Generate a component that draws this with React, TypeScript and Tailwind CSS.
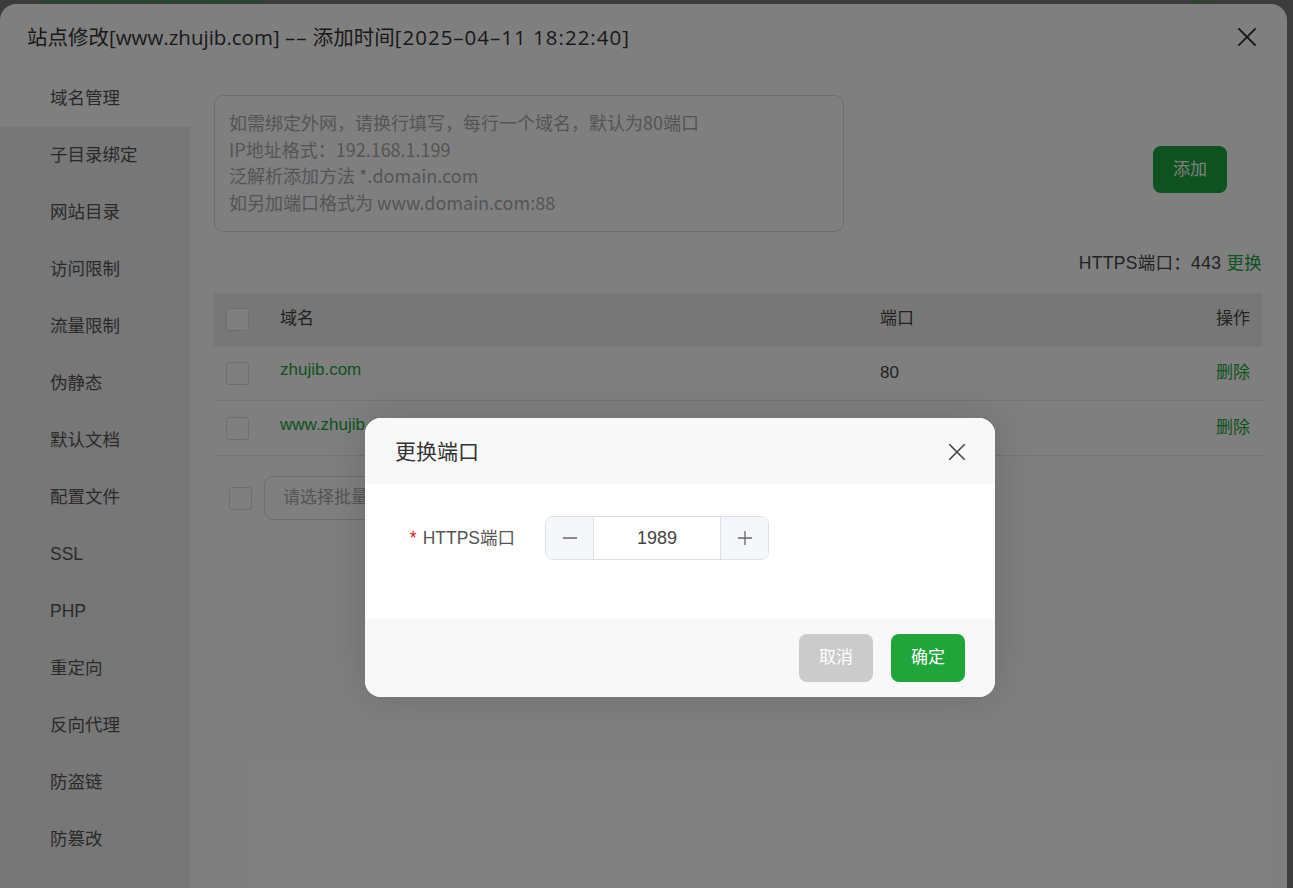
import React from 'react';

const sideItems = ['域名管理', '子目录绑定', '网站目录', '访问限制', '流量限制', '伪静态', '默认文档', '配置文件', 'SSL', 'PHP', '重定向', '反向代理', '防盗链', '防篡改'];

const Checkbox = () => (
  <span className="inline-block w-[23px] h-[23px] rounded-[3px] border border-[#dcdcdc] bg-white" />
);

const XIcon = ({ size }: { size: number }) => (
  <svg width={size} height={size} viewBox="0 0 20 20" fill="none" stroke="currentColor" strokeWidth={1.8} strokeLinecap="square">
    <path d="M2 2 L18 18 M18 2 L2 18" />
  </svg>
);

export default function App() {
  return (
    <div
      className="relative w-[1293px] h-[888px] overflow-hidden bg-[#787878] text-[#333]"
      style={{ fontFamily: '"Liberation Sans", "Noto Sans CJK SC", sans-serif' }}
    >
      {/* page behind the site dialog */}
      <div className="h-[4px] relative overflow-hidden">
        <div className="absolute left-[40px] top-[-14px] text-[16px] text-[#20a53a]">/www/wwwroot/www.zhujib.com</div>
        <div className="absolute left-[1190px] top-[-14px] text-[16px] text-[#20a53a]">377</div>
      </div>

      {/* site dialog */}
      <div className="w-[1287px] h-[884px] bg-white rounded-t-[16px] flex flex-col overflow-hidden">
        <div className="h-[66px] shrink-0 flex items-center justify-between pl-[27px] pr-[30px]">
          <span className="text-[20.5px] text-[#333]" style={{ fontFamily: '"Open Sans", "Noto Sans CJK SC", sans-serif' }}>
            站点修改[www.zhujib.com] <span className="tracking-[1px]">––</span> 添加时间<span className="tracking-[1px]">[2025–04–11 18:22:40]</span>
          </span>
          <span className="text-[#333]"><XIcon size={20} /></span>
        </div>
        <div className="flex flex-1">
          <div className="w-[190px] shrink-0 bg-[#eeeeee] flex flex-col">
            {sideItems.map((s, i) => (
              <div
                key={s}
                className={`h-[57px] flex items-center pl-[50px] text-[17.5px] text-[#555] ${i === 0 ? 'bg-white' : ''}`}
              >
                {s}
              </div>
            ))}
          </div>
          <div className="flex-1 pl-[24px] pr-[25px] pt-[25px]">
            <div className="flex items-center">
              <div className="w-[630px] h-[137px] rounded-[9px] border border-[#dcdcdc] px-[14px] pt-[13px] text-[18px] leading-[26.7px] text-[#aaa]" style={{ fontFamily: '"Noto Sans CJK SC", "Liberation Sans", sans-serif' }}>
                <div>如需绑定外网，请换行填写，每行一个域名，默认为80端口</div>
                <div>IP地址格式：192.168.1.199</div>
                <div>泛解析添加方法 *.domain.com</div>
                <div>如另加端口格式为 www.domain.com:88</div>
              </div>
              <div className="flex-1 flex justify-end pr-[35px] pt-[12px]">
                <button className="w-[74px] h-[47px] rounded-[8px] bg-[#1aa53e] text-white text-[17px]">添加</button>
              </div>
            </div>
            <div className="mt-[19px] h-[24px] flex items-center justify-end text-[17.5px] text-[#444] tracking-[0.3px]">
              HTTPS端口：443&nbsp;<span className="text-[#20a53a]">更换</span>
            </div>
            <div className="mt-[18px]">
              <div className="h-[53px] bg-[#efefef] border-b border-[#e6e6e6] flex items-center px-[12px] text-[17px] text-[#444]">
                <Checkbox />
                <span className="ml-[31px] w-[600px]">域名</span>
                <span className="flex-1">端口</span>
                <span>操作</span>
              </div>
              {[
                ['zhujib.com', '80'],
                ['www.zhujib.com', '80'],
              ].map(([d, p]) => (
                <div key={d} className="h-[55px] border-b border-[#e6e6e6] flex items-center px-[12px] text-[17px]">
                  <Checkbox />
                  <span className="ml-[31px] w-[600px] text-[#20a53a] -mt-[6px]">{d}</span>
                  <span className="flex-1 text-[#444]">{p}</span>
                  <span className="text-[#20a53a]">删除</span>
                </div>
              ))}
              <div className="mt-[20px] flex items-center pl-[15px]">
                <Checkbox />
                <div className="ml-[12px] w-[210px] h-[44px] rounded-[9px] border border-[#dcdcdc] flex items-center pl-[18px] text-[17px] text-[#aaa]">
                  请选择批量操作
                </div>
              </div>
            </div>
          </div>
        </div>
      </div>

      {/* shade */}
      <div className="absolute inset-0 bg-black/50" />

      {/* port dialog */}
      <div className="absolute left-[365px] top-[418px] w-[630px] h-[279px] rounded-[16px] bg-white overflow-hidden flex flex-col shadow-[0_0_40px_rgba(0,0,0,0.15)]">
        <div className="h-[66px] bg-[#f8f8f8] flex items-center justify-between pl-[30px] pr-[29px] pt-[2px]">
          <span className="text-[21px] text-[#333]">更换端口</span>
          <span className="text-[#444]"><XIcon size={18} /></span>
        </div>
        <div className="h-[135px] flex items-start pt-[32px]">
          <div className="w-[150px] text-right text-[17.5px] text-[#555] leading-[44px]">
            <span className="text-[#ef0808] mr-[6px]">*</span>HTTPS端口
          </div>
          <div className="ml-[30px] w-[224px] h-[44px] rounded-[8px] border border-[#dcdfe6] flex overflow-hidden">
            <div className="w-[48px] bg-[#f5f7fa] border-r border-[#dcdfe6] flex items-center justify-center text-[#666]">
              <svg width="16" height="16" viewBox="0 0 16 16" stroke="currentColor" strokeWidth={1.3}><path d="M1 8 H15" /></svg>
            </div>
            <div className="flex-1 flex items-center justify-center text-[18px] text-[#444]">1989</div>
            <div className="w-[48px] bg-[#f5f7fa] border-l border-[#dcdfe6] flex items-center justify-center text-[#666]">
              <svg width="16" height="16" viewBox="0 0 16 16" stroke="currentColor" strokeWidth={1.3}><path d="M1 8 H15 M8 1 V15" /></svg>
            </div>
          </div>
        </div>
        <div className="flex-1 bg-[#f8f8f8] flex items-center justify-end gap-[18px] pr-[30px]">
          <button className="w-[74px] h-[48px] rounded-[8px] bg-[#cbcbcb] text-white text-[17px]">取消</button>
          <button className="w-[74px] h-[48px] rounded-[8px] bg-[#20a53a] text-white text-[17px]">确定</button>
        </div>
      </div>
    </div>
  );
}
